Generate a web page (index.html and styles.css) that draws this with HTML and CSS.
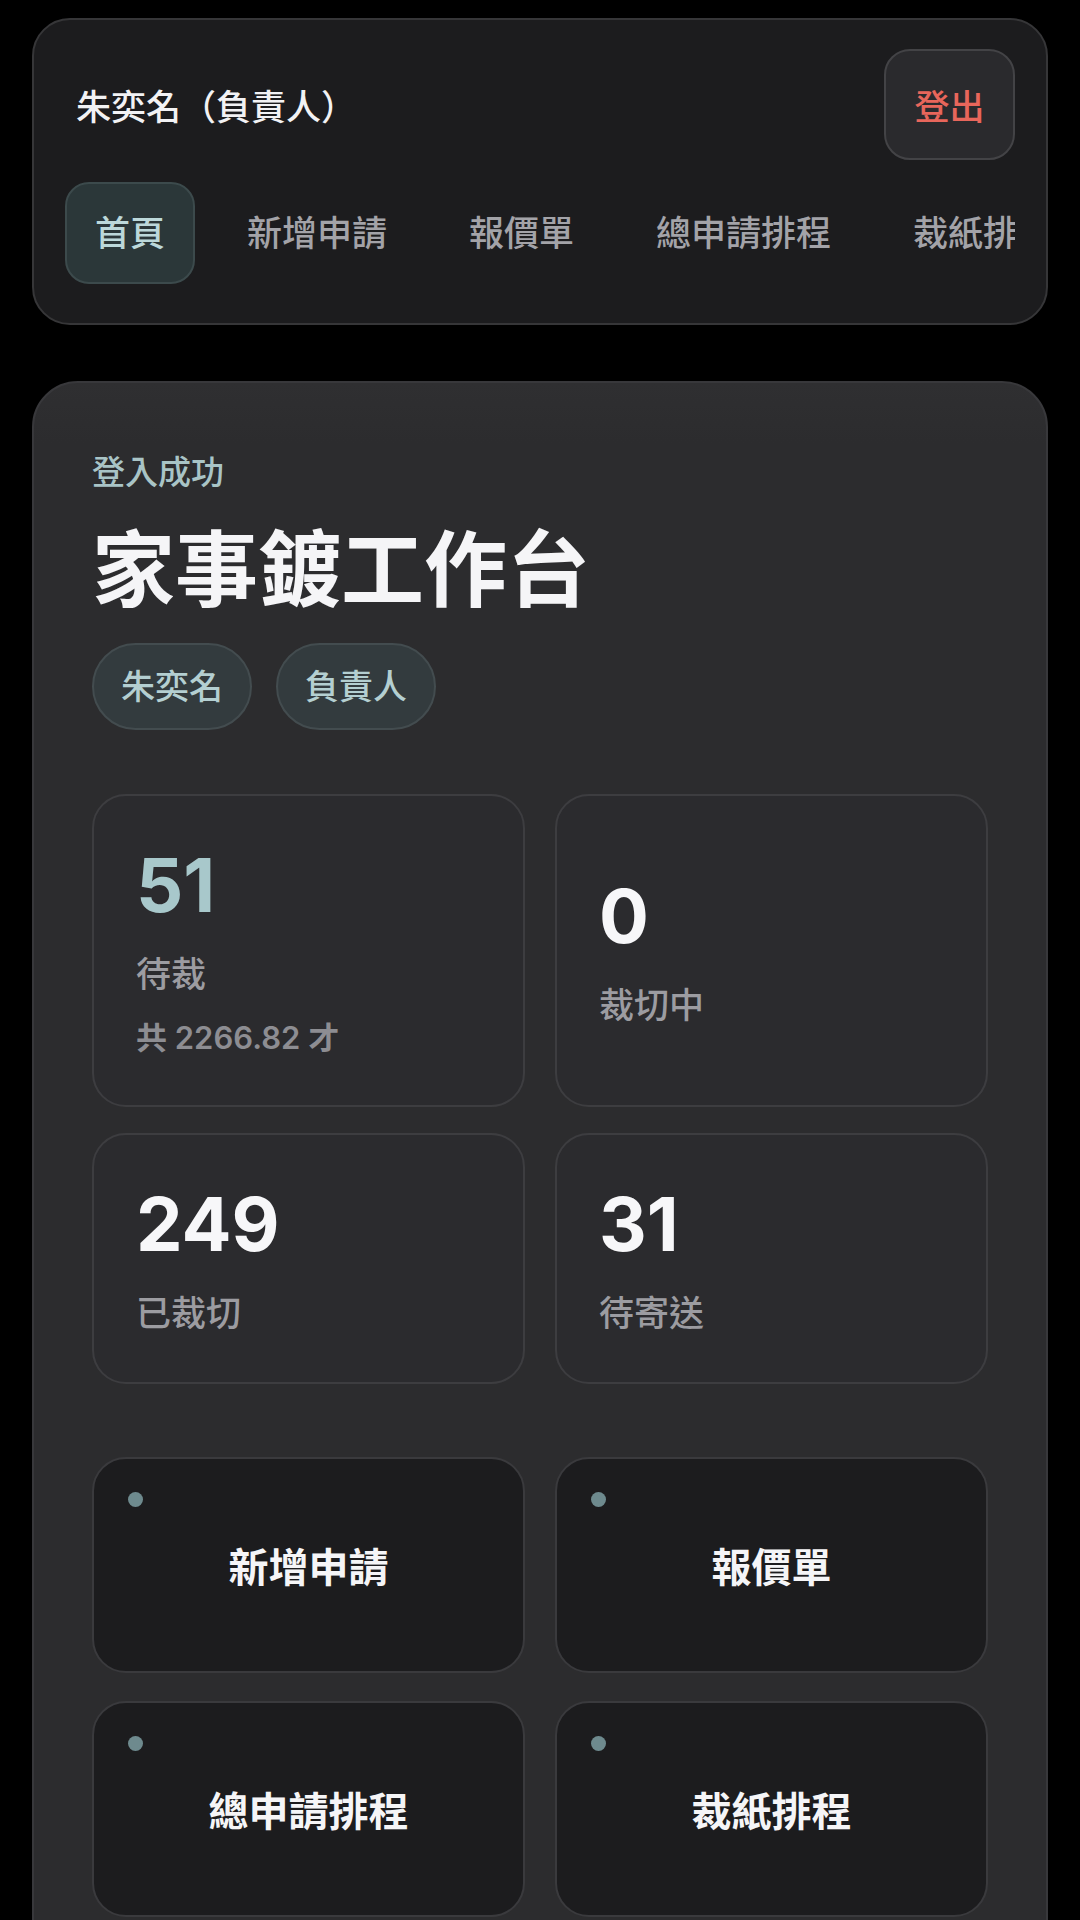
FILE: index.html
```html
<!DOCTYPE html>
<html lang="zh-Hant">
<head>
    <meta charset="UTF-8">
    <meta name="viewport" content="width=device-width, initial-scale=1.0">
    <title>家事鍍工作台</title>
    <link rel="stylesheet" href="styles.css">
</head>
<body>
    <!-- 頂部使用者列 -->
    <header class="topbar">
        <div class="topbar-row">
            <span class="user-name">朱奕名（負責人）</span>
            <button class="logout-btn">登出</button>
        </div>
        <nav class="tabs">
            <a class="tab active">首頁</a>
            <a class="tab">新增申請</a>
            <a class="tab">報價單</a>
            <a class="tab">總申請排程</a>
            <a class="tab">裁紙排程</a>
        </nav>
    </header>

    <!-- 工作台 -->
    <main class="panel">
        <p class="eyebrow">登入成功</p>
        <h1 class="panel-title">家事鍍工作台</h1>
        <div class="chips">
            <span class="chip">朱奕名</span>
            <span class="chip">負責人</span>
        </div>

        <div class="stats">
            <div class="stat">
                <div class="stat-num accent">51</div>
                <div class="stat-label">待裁</div>
                <div class="stat-sub">共 2266.82 才</div>
            </div>
            <div class="stat">
                <div class="stat-num">0</div>
                <div class="stat-label">裁切中</div>
            </div>
            <div class="stat">
                <div class="stat-num">249</div>
                <div class="stat-label">已裁切</div>
            </div>
            <div class="stat">
                <div class="stat-num">31</div>
                <div class="stat-label">待寄送</div>
            </div>
        </div>

        <div class="actions">
            <a class="action"><span class="dot"></span>新增申請</a>
            <a class="action"><span class="dot"></span>報價單</a>
            <a class="action"><span class="dot"></span>總申請排程</a>
            <a class="action"><span class="dot"></span>裁紙排程</a>
        </div>
    </main>
</body>
</html>
```

FILE: styles.css
```css
/* 全局 */
body {
    margin: 0;
    padding: 18px 32px 0;
    background: #000;
    color: #f5f5f7;
    font-family: Inter, "Noto Sans CJK TC", sans-serif;
    height: 1920px;
    box-sizing: border-box;
    overflow: hidden;
}

/* 頂部使用者列 */
.topbar {
    background: #1c1c1e;
    border: 2px solid #363638;
    border-radius: 38px;
    padding: 29px 31px 39px;
}

.topbar-row {
    display: flex;
    justify-content: space-between;
    align-items: center;
}

.user-name {
    margin-left: 11px;
    font-size: 35px;
    font-weight: 500;
    color: #f2f2f4;
}

.logout-btn {
    width: 131px;
    height: 111px;
    background: #2a2a2d;
    border: 2px solid #434346;
    border-radius: 26px;
    color: #e8665b;
    font-family: inherit;
    font-size: 35px;
    font-weight: 500;
}

.tabs {
    display: flex;
    gap: 22px;
    margin-top: 22px;
    overflow: hidden;
    white-space: nowrap;
}

.tab {
    flex: none;
    padding: 0 28px;
    height: 102px;
    line-height: 98px;
    box-sizing: border-box;
    border: 2px solid transparent;
    border-radius: 24px;
    font-size: 35px;
    font-weight: 500;
    color: #a3a3a8;
}

.tab.active {
    background: #2b3739;
    border-color: #3c4a4c;
    color: #bcd8da;
}

/* 工作台 */
.panel {
    margin-top: 56px;
    min-height: 1600px;
    background: linear-gradient(#2f2f31, #2c2c2e 60px);
    border: 2px solid #38383b;
    border-radius: 46px;
    padding: 69px 58px 0;
}

.eyebrow {
    margin: 0;
    font-size: 33px;
    line-height: 40px;
    font-weight: 500;
    color: #a9c4c6;
}

.panel-title {
    margin: 30px 0 0;
    font-size: 83px;
    line-height: 96px;
    font-weight: 700;
    color: #f5f5f7;
}

.chips {
    display: flex;
    gap: 24px;
    margin-top: 25px;
}

.chip {
    height: 87px;
    padding: 0 27px;
    box-sizing: border-box;
    line-height: 83px;
    border: 2px solid #434c4f;
    border-radius: 44px;
    background: #333b3e;
    font-size: 34px;
    font-weight: 500;
    color: #b4cfd1;
}

/* 統計 */
.stats {
    display: grid;
    grid-template-columns: 1fr 1fr;
    gap: 26px 30px;
    margin-top: 64px;
}

.stat {
    display: flex;
    flex-direction: column;
    justify-content: center;
    padding: 49px 42px;
    background: #2b2b2e;
    border: 2px solid #3d3d40;
    border-radius: 34px;
}

.stat-num {
    font-size: 74px;
    line-height: 80px;
    font-weight: 700;
    color: #f7f7f9;
}

.stat-num.accent {
    color: #a8c8cb;
}

.stat-label {
    margin-top: 29px;
    font-size: 35px;
    line-height: 40px;
    font-weight: 500;
    color: #9c9ca1;
}

.stat-sub {
    margin-top: 26px;
    font-size: 31px;
    line-height: 36px;
    font-weight: 600;
    color: #8d8d92;
}

/* 功能入口 */
.actions {
    display: grid;
    grid-template-columns: 1fr 1fr;
    gap: 28px 30px;
    margin-top: 73px;
}

.action {
    position: relative;
    display: flex;
    justify-content: center;
    align-items: center;
    height: 216px;
    box-sizing: border-box;
    background: #1c1c1e;
    border: 2px solid #3a3a3d;
    border-radius: 34px;
    font-size: 40px;
    font-weight: 700;
    color: #f5f5f7;
}

.dot {
    position: absolute;
    top: 33px;
    left: 34px;
    width: 15px;
    height: 15px;
    border-radius: 50%;
    background: #6e8a8e;
}
```
